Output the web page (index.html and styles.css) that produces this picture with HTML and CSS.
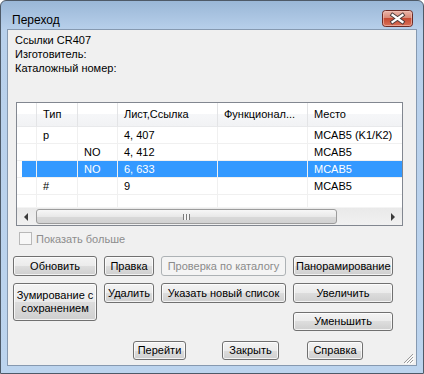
FILE: index.html
```html
<!DOCTYPE html>
<html lang="ru">
<head>
  <meta charset="UTF-8" />
  <title>Переход</title>
  <link rel="stylesheet" href="styles.css">
</head>
<body>
  <div class="window">
    <div class="titlebar">
      <span class="title">Переход</span>
      <div class="close-btn">
        <svg viewBox="0 0 31 17" width="31" height="17" xmlns="http://www.w3.org/2000/svg">
          <defs>
            <linearGradient id="cg" x1="0" y1="0" x2="0" y2="1">
              <stop offset="0" stop-color="#ecb9ad"/>
              <stop offset="0.45" stop-color="#d98a78"/>
              <stop offset="0.5" stop-color="#c64a33"/>
              <stop offset="1" stop-color="#d9735a"/>
            </linearGradient>
          </defs>
          <rect x="0.5" y="0.5" width="30" height="16" rx="3" fill="url(#cg)" stroke="#6b2b26"/>
          <rect x="1.5" y="1.5" width="28" height="14" rx="2" fill="none" stroke="#f3c7bd" stroke-opacity="0.6"/>
          <path d="M10.5 5 L20.5 12 M20.5 5 L10.5 12" stroke="#4a3a3a" stroke-width="4" stroke-linecap="square"/>
          <path d="M10.5 5 L20.5 12 M20.5 5 L10.5 12" stroke="#fff" stroke-width="2.2" stroke-linecap="square"/>
        </svg>
      </div>
    </div>

    <div class="client">
      <div class="info">
        <div>Ссылки CR407</div>
        <div>Изготовитель:</div>
        <div>Каталожный номер:</div>
      </div>

      <div class="list">
        <div class="row head">
          <div class="cell"></div>
          <div class="cell">Тип</div>
          <div class="cell"></div>
          <div class="cell">Лист,Ссылка</div>
          <div class="cell">Функционал...</div>
          <div class="cell">Место</div>
        </div>
        <div class="row">
          <div class="cell"></div>
          <div class="cell">p</div>
          <div class="cell"></div>
          <div class="cell">4, 407</div>
          <div class="cell"></div>
          <div class="cell">MCAB5 (K1/K2)</div>
        </div>
        <div class="row">
          <div class="cell"></div>
          <div class="cell"></div>
          <div class="cell">NO</div>
          <div class="cell">4, 412</div>
          <div class="cell"></div>
          <div class="cell">MCAB5</div>
        </div>
        <div class="row selected">
          <div class="cell"></div>
          <div class="cell"></div>
          <div class="cell">NO</div>
          <div class="cell">6, 633</div>
          <div class="cell"></div>
          <div class="cell">MCAB5</div>
        </div>
        <div class="row">
          <div class="cell"></div>
          <div class="cell">#</div>
          <div class="cell"></div>
          <div class="cell">9</div>
          <div class="cell"></div>
          <div class="cell">MCAB5</div>
        </div>
        <div class="row stub">
          <div class="cell"></div>
          <div class="cell"></div>
          <div class="cell"></div>
          <div class="cell"></div>
          <div class="cell"></div>
          <div class="cell"></div>
        </div>
        <div class="hscroll">
          <span class="arrow left"></span>
          <div class="thumb"><span class="thumb-grip"></span></div>
          <span class="arrow right"></span>
        </div>
      </div>

      <label class="more">
        <span class="checkbox"></span>
        Показать больше
      </label>

      <div class="actions">
        <button class="btn">Обновить</button>
        <button class="btn">Правка</button>
        <button class="btn" disabled>Проверка по каталогу</button>
        <button class="btn">Панорамирование</button>
        <button class="btn tall">Зумирование с<br>сохранением</button>
        <button class="btn">Удалить</button>
        <button class="btn">Указать новый список</button>
        <button class="btn">Увеличить</button>
        <button class="btn zoom-out">Уменьшить</button>
      </div>

      <div class="footer">
        <button class="btn go">Перейти</button>
        <button class="btn close">Закрыть</button>
        <button class="btn help">Справка</button>
      </div>

      <svg class="size-grip" viewBox="0 0 12 12" width="12" height="12" xmlns="http://www.w3.org/2000/svg">
        <path d="M11 2 L2 11 M11 5 L5 11 M11 8 L8 11" stroke="#9a9a9a" stroke-width="1"/>
        <path d="M12 3 L3 12 M12 6 L6 12 M12 9 L9 12" stroke="#ffffff" stroke-width="1"/>
      </svg>
    </div>
  </div>
</body>
</html>
```

FILE: styles.css
```css
body {
  margin: 0;
  background: #fff;
  font-family: 'Liberation Sans', Arial, sans-serif;
  font-size: 11px;
  color: #000;
}
.window {
  width: 424px;
  height: 374px;
  box-sizing: border-box;
  border: 1px solid #4e5a68;
  border-radius: 6px 6px 0 0;
  background: linear-gradient(#9ab7d7, #b8d0eb 29px, #bcd4ee);
  padding: 0 7px 8px 7px;
}
.titlebar {
  height: 29px;
  display: flex;
  justify-content: space-between;
  align-items: flex-start;
}
.title {
  font-size: 12px;
  line-height: 14px;
  margin: 12px 0 0 4px;
}
.close-btn {
  margin: 9px 3px 0 0;
  width: 31px;
  height: 17px;
}
.close-btn svg {
  display: block;
}
.client {
  position: relative;
  height: 335px;
  background: #f0f0f0;
  box-shadow: 0 0 0 1px #8699b0;
}

/* header text */
.info {
  padding: 3px 0 0 7px;
  line-height: 14px;
}

/* list view */
.list {
  margin: 27px 0 0 8px;
  width: 387px;
  height: 124px;
  box-sizing: border-box;
  border: 1px solid #828790;
  background: #fff;
  display: flex;
  flex-direction: column;
}
.row {
  display: grid;
  grid-template-columns: 20px 41px 40px 100px 90px 1fr;
  height: 17px;
}
.cell {
  box-sizing: border-box;
  border-right: 1px solid #f0f0f0;
  border-bottom: 1px solid #f0f0f0;
  padding-left: 6px;
  line-height: 16px;
  white-space: nowrap;
  overflow: hidden;
}
.cell:last-child {
  border-right: none;
}
.row.head {
  height: 24px;
  background: linear-gradient(#ffffff 0%, #ffffff 45%, #f6f7f9 45%, #f1f2f4 100%);
}
.row.head .cell {
  line-height: 23px;
  border-right-color: #e3e4e6;
  border-bottom-color: #e8e9eb;
}
.row.selected .cell {
  background: #3399ff;
  color: #fff;
}
.row.selected .cell:first-child {
  background: linear-gradient(90deg, #fff 5px, #3399ff 5px);
}
.row.stub {
  height: 12px;
}
.row.stub .cell {
  border-bottom: none;
}
.hscroll {
  height: 17px;
  display: flex;
  align-items: center;
  background: linear-gradient(#e9e9e9, #f1f1f1);
  border-top: 1px solid #f4f4f4;
}
.arrow {
  width: 18px;
  height: 17px;
  display: flex;
  align-items: center;
  justify-content: center;
}
.arrow::before {
  content: "";
  border-top: 4px solid transparent;
  border-bottom: 4px solid transparent;
}
.arrow.left::before {
  border-right: 4px solid #3c3c3c;
}
.arrow.right {
  margin-left: auto;
}
.arrow.right::before {
  border-left: 4px solid #3c3c3c;
}
.thumb {
  width: 301px;
  height: 15px;
  margin-left: 1px;
  box-sizing: border-box;
  border: 1px solid #9c9c9c;
  border-radius: 3px;
  background: linear-gradient(#f7f7f7, #e9e9e9 50%, #d9d9d9 51%, #d2d2d2);
  display: flex;
  align-items: center;
  justify-content: center;
}
.thumb-grip {
  width: 7px;
  height: 6px;
  background: repeating-linear-gradient(90deg, #7a7a7a 0 1px, #f4f4f4 1px 3px);
}

/* checkbox */
.more {
  display: flex;
  align-items: center;
  gap: 4px;
  margin: 6px 0 0 11px;
  height: 13px;
  color: #8d8d8d;
}
.checkbox {
  width: 13px;
  height: 13px;
  box-sizing: border-box;
  border: 1px solid #b8b8b8;
  background: #f7f7f7;
}

/* buttons */
.btn {
  font-family: inherit;
  font-size: 11px;
  font-weight: 400;
  color: #000;
  height: 20px;
  padding: 0 2px;
  box-sizing: border-box;
  border: 1px solid #707070;
  border-radius: 3px;
  background: linear-gradient(#f3f3f3 0%, #ebebeb 50%, #dddddd 50%, #cfcfcf 100%);
  box-shadow: inset 0 0 0 1px rgba(255, 255, 255, 0.75);
  line-height: 13px;
  white-space: nowrap;
}
.btn:disabled {
  color: #8b8b8b;
  border-color: #adb2b5;
  background: #f4f4f4;
  box-shadow: none;
}
.actions {
  display: grid;
  grid-template-columns: 84px 50px 125px 100px;
  grid-template-rows: 20px 20px 21px;
  column-gap: 7px;
  row-gap: 7px;
  margin: 11px 0 0 5px;
}
.btn.tall {
  grid-row: 2 / 4;
  height: 38px;
  align-self: start;
  white-space: normal;
}
.btn.zoom-out {
  grid-column: 4;
  grid-row: 3;
  height: 19px;
  align-self: end;
}
.footer {
  display: flex;
  margin: 10px 0 0 125px;
}
.footer .btn {
  height: 19px;
}
.btn.go {
  width: 53px;
}
.btn.close {
  width: 57px;
  margin-left: 36px;
}
.btn.help {
  width: 56px;
  margin-left: 28px;
}
.size-grip {
  position: absolute;
  right: 2px;
  bottom: 1px;
}
```
